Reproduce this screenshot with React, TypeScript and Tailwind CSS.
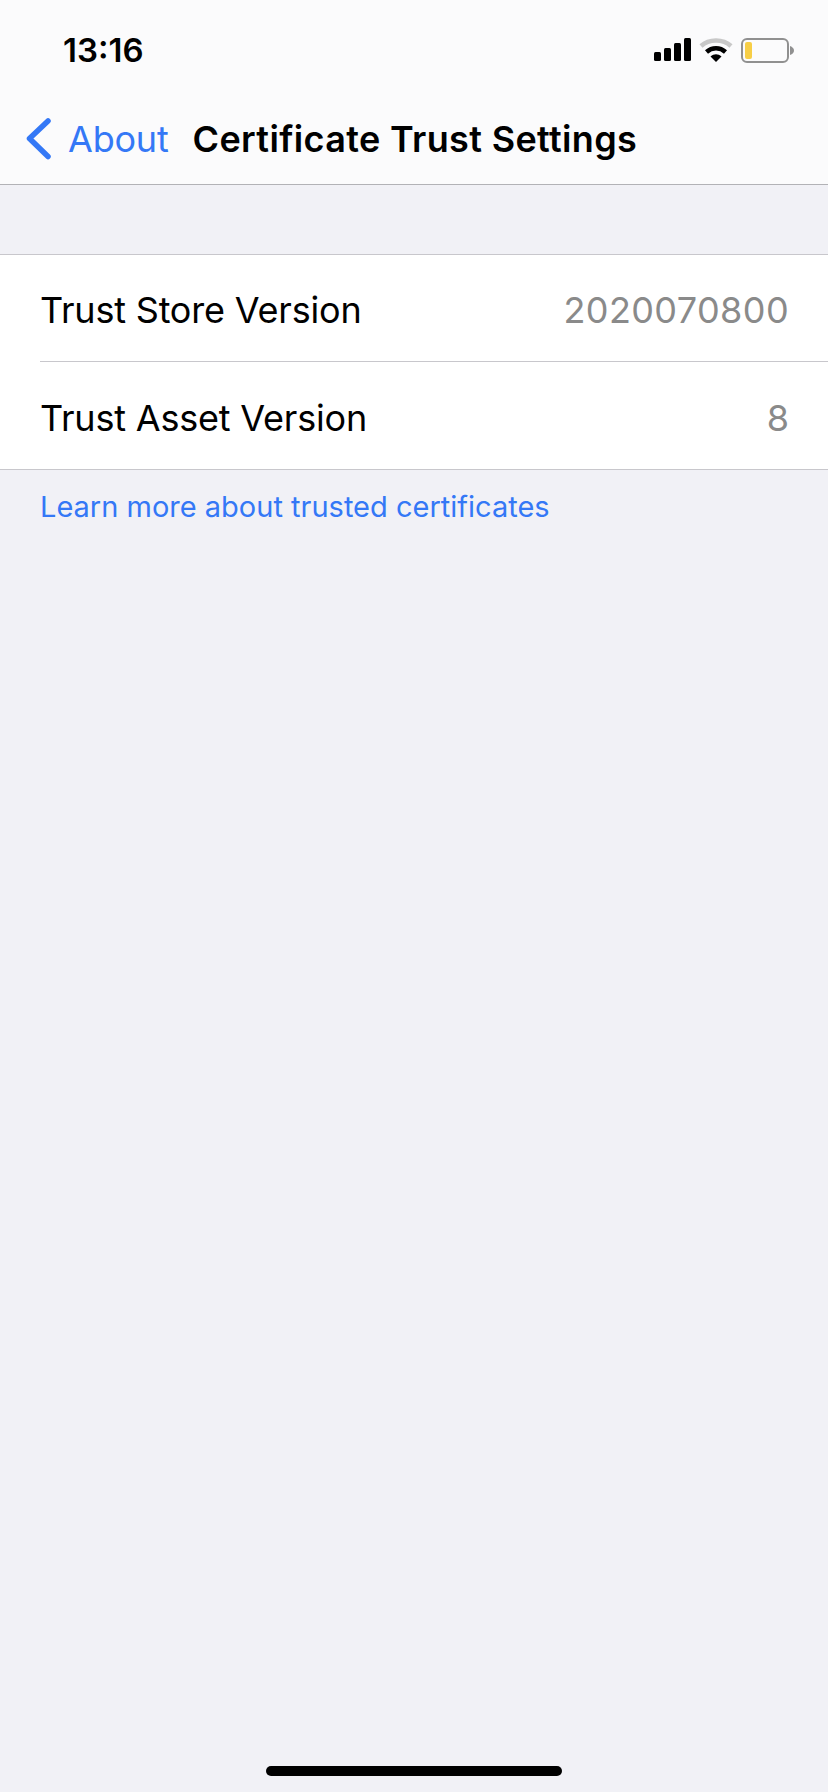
export default function App() {
  const font = { fontFamily: 'Inter, "Liberation Sans", sans-serif' };
  return (
    <div className="relative flex h-[1792px] w-[828px] flex-col overflow-hidden bg-[#f1f1f6]" style={font}>
      <header className="h-[185px] shrink-0 border-b border-[#b2b2b6] bg-[#fbfbfc]">
        <div className="flex h-[100px] items-center justify-between pl-[63px] pr-[34px]">
          <span className="text-[33px] font-semibold leading-none text-black">13:16</span>
          <div className="flex items-center gap-[8px]">
            <svg width="38" height="24" viewBox="0 0 38 24" fill="#000">
              <rect x="1" y="14" width="7" height="9" rx="1.5" />
              <rect x="11" y="10" width="7" height="13" rx="1.5" />
              <rect x="21" y="5" width="7" height="18" rx="1.5" />
              <rect x="31" y="0" width="7" height="23" rx="1.5" />
            </svg>
            <svg width="34" height="26" viewBox="0 0 34 26">
              <path d="M2 9 C10 1.5 24 1.5 32 9" fill="none" stroke="#c8c8c8" strokeWidth="4.5" />
              <path d="M7.5 15 C13 10 21 10 26.5 15" fill="none" stroke="#000" strokeWidth="4.5" />
              <path d="M11.5 19.5 C15 16.5 19 16.5 22.5 19.5 L17 25 Z" fill="#000" />
            </svg>
            <div className="flex items-center">
              <div className="flex h-[25px] w-[48px] items-center rounded-[6px] border-2 border-[#909090] p-[2px]">
                <div className="h-full w-[7px] rounded-[2px] bg-[#f7ce46]" />
              </div>
              <svg width="4" height="9" viewBox="0 0 4 9" className="ml-[1px]">
                <path d="M0 0 C2.5 1 4 2.5 4 4.5 C4 6.5 2.5 8 0 9 Z" fill="#909090" />
              </svg>
            </div>
          </div>
        </div>
        <div className="flex h-[84px] items-center pb-[6px]">
          <svg width="26" height="44" viewBox="0 0 26 44" className="ml-[25px]">
            <path d="M23 4 L4.5 21.5 L23 39.5" fill="none" stroke="#3478f6" strokeWidth="5.5" strokeLinecap="round" strokeLinejoin="round" />
          </svg>
          <span className="ml-[17px] text-[36px] leading-none tracking-[-0.2px] text-[#3478f6]">About</span>
          <span className="ml-[24px] text-[36px] font-semibold leading-none tracking-[0.35px] text-black">Certificate Trust Settings</span>
        </div>
      </header>
      <main className="mt-[69px] border-y border-[#c8c7cc] bg-white">
        <div className="flex h-[106px] items-center justify-between pl-[40px] pr-[39px] pt-[4px] text-[36px] leading-none">
          <span className="tracking-[-0.2px] text-black">Trust Store Version</span>
          <span className="tracking-[0.4px] text-[#8a8a8a]">2020070800</span>
        </div>
        <div className="ml-[40px] h-px bg-[#c8c7cc]" />
        <div className="flex h-[107px] items-center justify-between pl-[40px] pr-[39px] pt-[4px] text-[36px] leading-none">
          <span className="tracking-[-0.2px] text-black">Trust Asset Version</span>
          <span className="text-[#8a8a8a]">8</span>
        </div>
      </main>
      <p className="mt-[21px] pl-[40px] text-[29px] leading-[32px] text-[#3478f6]">Learn more about trusted certificates</p>
      <div className="absolute bottom-[16px] left-[266px] h-[10px] w-[296px] rounded-full bg-black" />
    </div>
  );
}
